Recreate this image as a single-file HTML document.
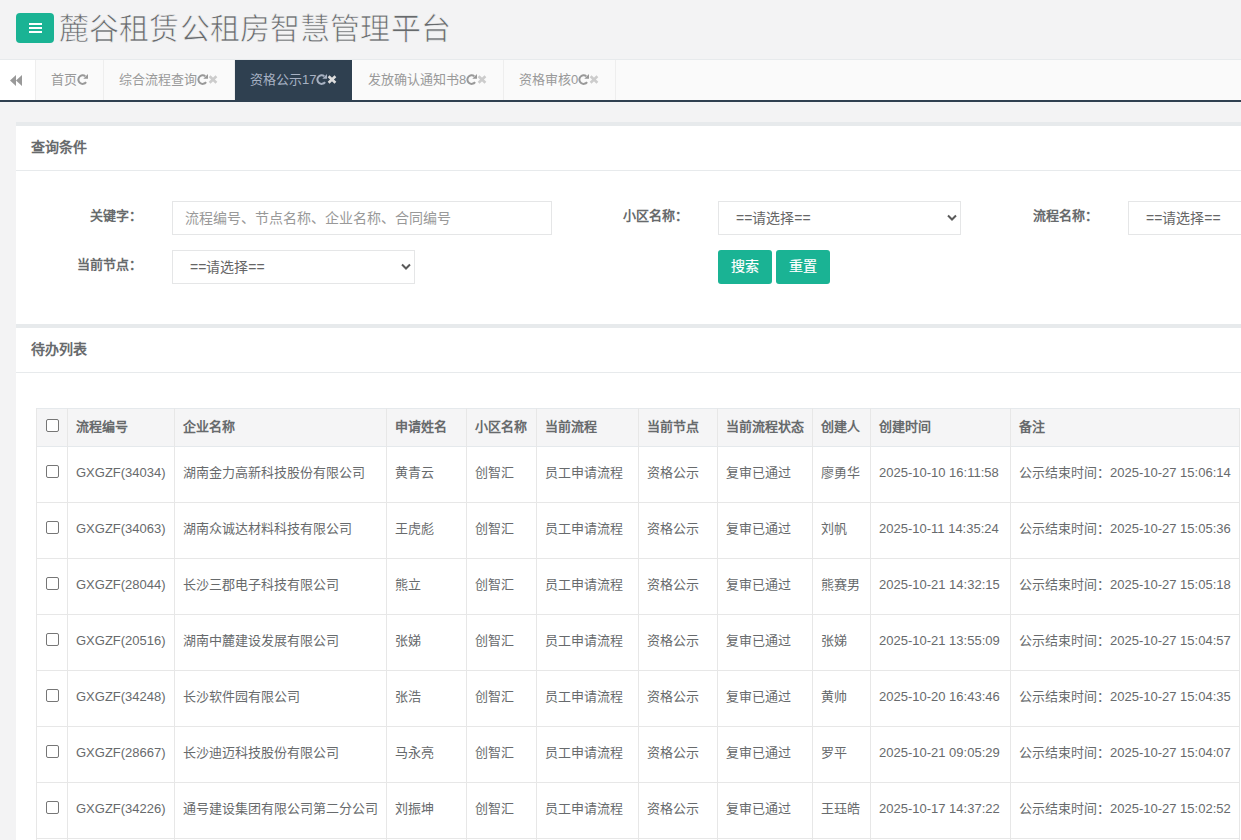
<!DOCTYPE html><html lang="zh-CN"><head><meta charset="utf-8"><title>麓谷租赁公租房智慧管理平台</title><style>
*{box-sizing:border-box}
html,body{margin:0;padding:0}
body{width:1241px;height:840px;overflow:hidden;position:relative;background:#f3f3f4;font-family:"Liberation Sans",sans-serif;color:#676a6c;font-size:13px}
.abs{position:absolute}
.menu{left:16px;top:13px;width:38px;height:30px;background:#1ab394;border-radius:4px}
.menu i{position:absolute;left:13px;width:13px;height:2px;background:#fff}
.title{left:59px;top:6px;font-size:30px;line-height:46px;color:#676a6c;white-space:nowrap;-webkit-text-stroke:0.7px #f3f3f4;letter-spacing:0.15px}
.tabbar{left:0;top:59px;width:1241px;height:43px;background:#fafafa;border-top:1px solid #e7eaec;border-bottom:2px solid #2f4050}
.back{left:0;top:0;width:36px;height:40px;background:#fff;border-right:1px solid #eee}
.tab{top:0;height:40px;line-height:40px;color:#999;border-right:1px solid #eee;padding-left:15px;white-space:nowrap}
.tab.active{background:#2f4050;color:#a7b1c2;border-right:0}
.tabsep{top:0;width:1px;height:40px;background:#fcfcfc}
.ic{display:inline-block;vertical-align:middle}
.tab .r{position:relative;top:-1px}
.tab .x{color:#ccc;position:relative;top:-1px}
.tab.active .x{color:#ddd}
.panel{left:16px;width:1225px;background:#fff;border-top:4px solid #e7eaec}
.ptitle{position:absolute;left:15px;font-weight:bold;font-size:14px;color:#676a6c;line-height:20px}
.sep{position:absolute;left:0;width:1225px;height:1px;background:#e7eaec}
.lbl{font-weight:bold;font-size:13px;line-height:20px;color:#676a6c;white-space:nowrap;text-align:right}
.inp{border:1px solid #e5e6e7;background:#fff;height:34px;font-size:14px;line-height:32px;white-space:nowrap}
.btn{top:250px;height:34px;width:54px;background:#1ab394;border-radius:3px;color:#fff;font-size:14px;line-height:32px;text-align:center;-webkit-text-stroke:0.2px #fff}
.hl{height:1px;background:#e7e7e7}
.vl{width:1px;background:#e7e7e7}
.cell{white-space:nowrap;line-height:20px;font-size:13px;color:#676a6c}
.th{font-weight:bold}
.cb{width:13px;height:13px;border:1px solid #767676;border-radius:2px;background:#fff}
</style></head><body>
<div class="abs menu"><i style="top:10px"></i><i style="top:14px"></i><i style="top:18px"></i></div>
<div class="abs title">麓谷租赁公租房智慧管理平台</div>
<div class="abs tabbar">
<div class="abs back"><svg class="abs" style="left:10px;top:15px" width="12" height="11" viewBox="0 0 12 11"><path d="M0 5.5 L6 0 L6 11 Z M6 5.5 L12 0 L12 11 Z" fill="#999"/></svg></div>
<div class="abs tab" style="left:36px;width:68px">首页<svg class="ic r" width="11" height="11" viewBox="0 0 11 11"><path d="M8.3 2.2 A4.3 4.3 0 1 0 9.1 8.2" fill="none" stroke="currentColor" stroke-width="2"/><path d="M6.3 4.7 L11 4.7 L11 0 Z" fill="currentColor"/></svg></div>
<div class="abs tab" style="left:104px;width:131px">综合流程查询<svg class="ic r" width="11" height="11" viewBox="0 0 11 11"><path d="M8.3 2.2 A4.3 4.3 0 1 0 9.1 8.2" fill="none" stroke="currentColor" stroke-width="2"/><path d="M6.3 4.7 L11 4.7 L11 0 Z" fill="currentColor"/></svg><svg class="ic x" width="10" height="9" viewBox="0 0 10 9"><path d="M1.6 1.3 L8.4 7.7 M8.4 1.3 L1.6 7.7" stroke="currentColor" stroke-width="2.6"/></svg></div>
<div class="abs tab active" style="left:235px;width:117px">资格公示17<svg class="ic r" width="11" height="11" viewBox="0 0 11 11"><path d="M8.3 2.2 A4.3 4.3 0 1 0 9.1 8.2" fill="none" stroke="currentColor" stroke-width="2"/><path d="M6.3 4.7 L11 4.7 L11 0 Z" fill="currentColor"/></svg><svg class="ic x" width="10" height="9" viewBox="0 0 10 9"><path d="M1.6 1.3 L8.4 7.7 M8.4 1.3 L1.6 7.7" stroke="currentColor" stroke-width="2.6"/></svg></div>
<div class="abs tab" style="left:353px;width:151px">发放确认通知书8<svg class="ic r" width="11" height="11" viewBox="0 0 11 11"><path d="M8.3 2.2 A4.3 4.3 0 1 0 9.1 8.2" fill="none" stroke="currentColor" stroke-width="2"/><path d="M6.3 4.7 L11 4.7 L11 0 Z" fill="currentColor"/></svg><svg class="ic x" width="10" height="9" viewBox="0 0 10 9"><path d="M1.6 1.3 L8.4 7.7 M8.4 1.3 L1.6 7.7" stroke="currentColor" stroke-width="2.6"/></svg></div>
<div class="abs tab" style="left:504px;width:112px">资格审核0<svg class="ic r" width="11" height="11" viewBox="0 0 11 11"><path d="M8.3 2.2 A4.3 4.3 0 1 0 9.1 8.2" fill="none" stroke="currentColor" stroke-width="2"/><path d="M6.3 4.7 L11 4.7 L11 0 Z" fill="currentColor"/></svg><svg class="ic x" width="10" height="9" viewBox="0 0 10 9"><path d="M1.6 1.3 L8.4 7.7 M8.4 1.3 L1.6 7.7" stroke="currentColor" stroke-width="2.6"/></svg></div>
<div class="abs tabsep" style="left:352px"></div>
</div>
<div class="abs panel" style="top:122px;height:202px">
<div class="ptitle" style="top:11px">查询条件</div>
<div class="sep" style="top:44px"></div>
</div>
<div class="abs lbl" style="left:60px;width:82px;top:206px">关键字：</div>
<div class="abs inp" style="left:172px;top:201px;width:380px;color:#999;padding-left:12px">流程编号、节点名称、企业名称、合同编号</div>
<div class="abs lbl" style="left:601px;width:87px;top:206px">小区名称：</div>
<div class="abs inp" style="left:718px;top:201px;width:243px;color:#666;padding-left:17px">==请选择==<svg class="abs" style="right:3px;top:12px" width="10" height="8" viewBox="0 0 10 8"><path d="M1 1.5 L5 5.5 L9 1.5" fill="none" stroke="#5a5a5a" stroke-width="2"/></svg></div>
<div class="abs lbl" style="left:1011px;width:87px;top:206px">流程名称：</div>
<div class="abs inp" style="left:1128px;top:201px;width:243px;color:#666;padding-left:17px">==请选择==</div>
<div class="abs lbl" style="left:40px;width:102px;top:255px">当前节点：</div>
<div class="abs inp" style="left:172px;top:250px;width:243px;color:#666;padding-left:17px">==请选择==<svg class="abs" style="right:3px;top:12px" width="10" height="8" viewBox="0 0 10 8"><path d="M1 1.5 L5 5.5 L9 1.5" fill="none" stroke="#5a5a5a" stroke-width="2"/></svg></div>
<div class="abs btn" style="left:718px">搜索</div>
<div class="abs btn" style="left:776px">重置</div>
<div class="abs panel" style="top:324px;height:516px">
<div class="ptitle" style="top:11px">待办列表</div>
<div class="sep" style="top:44px"></div>
</div>
<div class="abs" style="left:36px;top:446px;width:1203px;height:-38px"></div>
<div class="abs" style="left:36px;top:408px;width:1204px;height:38px;background:#f5f5f6"></div>
<div class="abs hl" style="left:36px;top:408px;width:1204px;background:#e5e9ec"></div>
<div class="abs hl" style="left:36px;top:446px;width:1204px;background:#e5e9ec"></div>
<div class="abs hl" style="left:36px;top:502px;width:1204px"></div>
<div class="abs hl" style="left:36px;top:558px;width:1204px"></div>
<div class="abs hl" style="left:36px;top:614px;width:1204px"></div>
<div class="abs hl" style="left:36px;top:670px;width:1204px"></div>
<div class="abs hl" style="left:36px;top:726px;width:1204px"></div>
<div class="abs hl" style="left:36px;top:782px;width:1204px"></div>
<div class="abs hl" style="left:36px;top:838px;width:1204px"></div>
<div class="abs vl" style="left:36px;top:408px;height:432px"></div>
<div class="abs vl" style="left:67px;top:408px;height:432px"></div>
<div class="abs vl" style="left:174px;top:408px;height:432px"></div>
<div class="abs vl" style="left:386px;top:408px;height:432px"></div>
<div class="abs vl" style="left:466px;top:408px;height:432px"></div>
<div class="abs vl" style="left:536px;top:408px;height:432px"></div>
<div class="abs vl" style="left:638px;top:408px;height:432px"></div>
<div class="abs vl" style="left:717px;top:408px;height:432px"></div>
<div class="abs vl" style="left:812px;top:408px;height:432px"></div>
<div class="abs vl" style="left:870px;top:408px;height:432px"></div>
<div class="abs vl" style="left:1010px;top:408px;height:432px"></div>
<div class="abs vl" style="left:1239px;top:408px;height:432px"></div>
<div class="abs cb" style="left:46px;top:419px"></div>
<div class="abs cell th" style="left:76px;top:417px">流程编号</div>
<div class="abs cell th" style="left:183px;top:417px">企业名称</div>
<div class="abs cell th" style="left:395px;top:417px">申请姓名</div>
<div class="abs cell th" style="left:475px;top:417px">小区名称</div>
<div class="abs cell th" style="left:545px;top:417px">当前流程</div>
<div class="abs cell th" style="left:647px;top:417px">当前节点</div>
<div class="abs cell th" style="left:726px;top:417px">当前流程状态</div>
<div class="abs cell th" style="left:821px;top:417px">创建人</div>
<div class="abs cell th" style="left:879px;top:417px">创建时间</div>
<div class="abs cell th" style="left:1019px;top:417px">备注</div>
<div class="abs cb" style="left:46px;top:465px"></div>
<div class="abs cell" style="left:76px;top:463px">GXGZF(34034)</div>
<div class="abs cell" style="left:183px;top:463px">湖南金力高新科技股份有限公司</div>
<div class="abs cell" style="left:395px;top:463px">黄青云</div>
<div class="abs cell" style="left:475px;top:463px">创智汇</div>
<div class="abs cell" style="left:545px;top:463px">员工申请流程</div>
<div class="abs cell" style="left:647px;top:463px">资格公示</div>
<div class="abs cell" style="left:726px;top:463px">复审已通过</div>
<div class="abs cell" style="left:821px;top:463px">廖勇华</div>
<div class="abs cell" style="left:879px;top:463px">2025-10-10 16:11:58</div>
<div class="abs cell" style="left:1019px;top:463px">公示结束时间：2025-10-27 15:06:14</div>
<div class="abs cb" style="left:46px;top:521px"></div>
<div class="abs cell" style="left:76px;top:519px">GXGZF(34063)</div>
<div class="abs cell" style="left:183px;top:519px">湖南众诚达材料科技有限公司</div>
<div class="abs cell" style="left:395px;top:519px">王虎彪</div>
<div class="abs cell" style="left:475px;top:519px">创智汇</div>
<div class="abs cell" style="left:545px;top:519px">员工申请流程</div>
<div class="abs cell" style="left:647px;top:519px">资格公示</div>
<div class="abs cell" style="left:726px;top:519px">复审已通过</div>
<div class="abs cell" style="left:821px;top:519px">刘帆</div>
<div class="abs cell" style="left:879px;top:519px">2025-10-11 14:35:24</div>
<div class="abs cell" style="left:1019px;top:519px">公示结束时间：2025-10-27 15:05:36</div>
<div class="abs cb" style="left:46px;top:577px"></div>
<div class="abs cell" style="left:76px;top:575px">GXGZF(28044)</div>
<div class="abs cell" style="left:183px;top:575px">长沙三郡电子科技有限公司</div>
<div class="abs cell" style="left:395px;top:575px">熊立</div>
<div class="abs cell" style="left:475px;top:575px">创智汇</div>
<div class="abs cell" style="left:545px;top:575px">员工申请流程</div>
<div class="abs cell" style="left:647px;top:575px">资格公示</div>
<div class="abs cell" style="left:726px;top:575px">复审已通过</div>
<div class="abs cell" style="left:821px;top:575px">熊赛男</div>
<div class="abs cell" style="left:879px;top:575px">2025-10-21 14:32:15</div>
<div class="abs cell" style="left:1019px;top:575px">公示结束时间：2025-10-27 15:05:18</div>
<div class="abs cb" style="left:46px;top:633px"></div>
<div class="abs cell" style="left:76px;top:631px">GXGZF(20516)</div>
<div class="abs cell" style="left:183px;top:631px">湖南中麓建设发展有限公司</div>
<div class="abs cell" style="left:395px;top:631px">张娣</div>
<div class="abs cell" style="left:475px;top:631px">创智汇</div>
<div class="abs cell" style="left:545px;top:631px">员工申请流程</div>
<div class="abs cell" style="left:647px;top:631px">资格公示</div>
<div class="abs cell" style="left:726px;top:631px">复审已通过</div>
<div class="abs cell" style="left:821px;top:631px">张娣</div>
<div class="abs cell" style="left:879px;top:631px">2025-10-21 13:55:09</div>
<div class="abs cell" style="left:1019px;top:631px">公示结束时间：2025-10-27 15:04:57</div>
<div class="abs cb" style="left:46px;top:689px"></div>
<div class="abs cell" style="left:76px;top:687px">GXGZF(34248)</div>
<div class="abs cell" style="left:183px;top:687px">长沙软件园有限公司</div>
<div class="abs cell" style="left:395px;top:687px">张浩</div>
<div class="abs cell" style="left:475px;top:687px">创智汇</div>
<div class="abs cell" style="left:545px;top:687px">员工申请流程</div>
<div class="abs cell" style="left:647px;top:687px">资格公示</div>
<div class="abs cell" style="left:726px;top:687px">复审已通过</div>
<div class="abs cell" style="left:821px;top:687px">黄帅</div>
<div class="abs cell" style="left:879px;top:687px">2025-10-20 16:43:46</div>
<div class="abs cell" style="left:1019px;top:687px">公示结束时间：2025-10-27 15:04:35</div>
<div class="abs cb" style="left:46px;top:745px"></div>
<div class="abs cell" style="left:76px;top:743px">GXGZF(28667)</div>
<div class="abs cell" style="left:183px;top:743px">长沙迪迈科技股份有限公司</div>
<div class="abs cell" style="left:395px;top:743px">马永亮</div>
<div class="abs cell" style="left:475px;top:743px">创智汇</div>
<div class="abs cell" style="left:545px;top:743px">员工申请流程</div>
<div class="abs cell" style="left:647px;top:743px">资格公示</div>
<div class="abs cell" style="left:726px;top:743px">复审已通过</div>
<div class="abs cell" style="left:821px;top:743px">罗平</div>
<div class="abs cell" style="left:879px;top:743px">2025-10-21 09:05:29</div>
<div class="abs cell" style="left:1019px;top:743px">公示结束时间：2025-10-27 15:04:07</div>
<div class="abs cb" style="left:46px;top:801px"></div>
<div class="abs cell" style="left:76px;top:799px">GXGZF(34226)</div>
<div class="abs cell" style="left:183px;top:799px">通号建设集团有限公司第二分公司</div>
<div class="abs cell" style="left:395px;top:799px">刘振坤</div>
<div class="abs cell" style="left:475px;top:799px">创智汇</div>
<div class="abs cell" style="left:545px;top:799px">员工申请流程</div>
<div class="abs cell" style="left:647px;top:799px">资格公示</div>
<div class="abs cell" style="left:726px;top:799px">复审已通过</div>
<div class="abs cell" style="left:821px;top:799px">王珏皓</div>
<div class="abs cell" style="left:879px;top:799px">2025-10-17 14:37:22</div>
<div class="abs cell" style="left:1019px;top:799px">公示结束时间：2025-10-27 15:02:52</div>
</body></html>
